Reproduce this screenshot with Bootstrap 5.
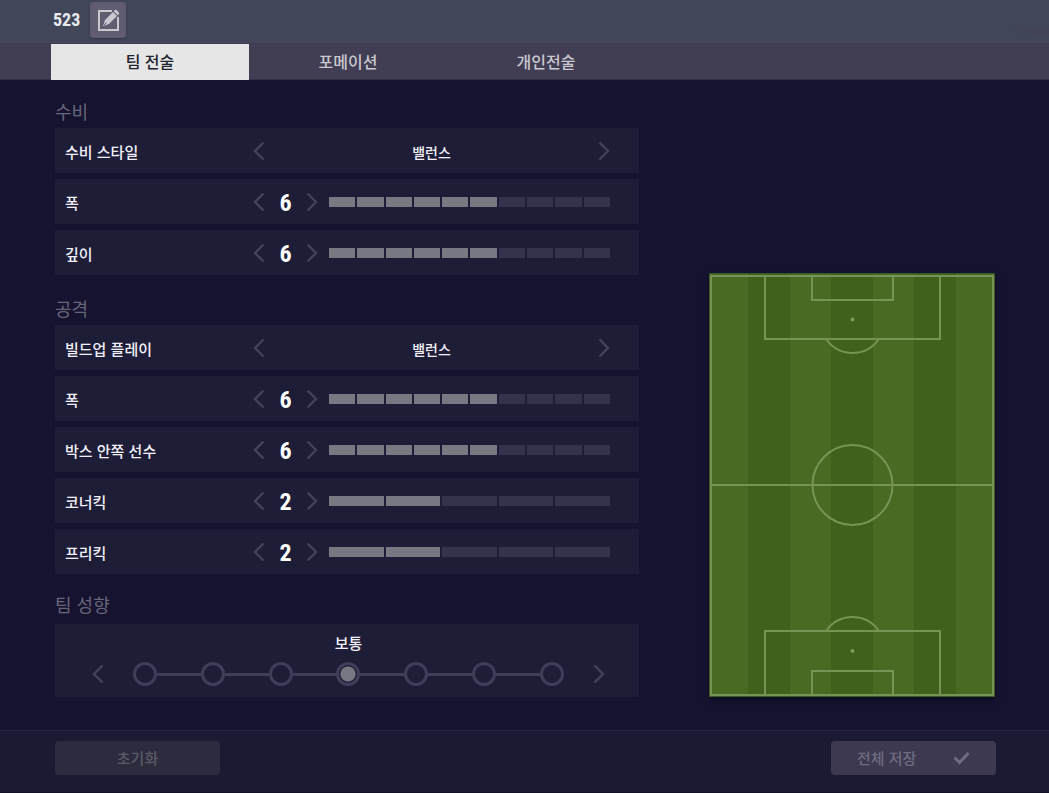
<!DOCTYPE html>
<html lang="ko">
<head>
<meta charset="utf-8">
<meta name="viewport" content="width=device-width, initial-scale=1">
<title>팀 전술</title>
<link href="https://cdn.jsdelivr.net/npm/bootstrap@5.3.0/dist/css/bootstrap.min.css" rel="stylesheet">
<style>
  :root { --line: #403d59; --page: #151330; --panel: #1e1d38; }
  body { background: var(--page); color: #f1f0f8; font: 500 15px/24px "Noto Sans CJK KR", sans-serif; }
  .num { font-family: "Roboto Condensed", "Open Sans Condensed", Roboto, sans-serif; font-weight: 700; }
  .top-bar { height: 43px; padding: 0 0 3px 53px;
    background: radial-gradient(ellipse 50px 5px at 100% 31px, #454054, transparent) , #414759; }
  .top-bar h1 { width: 29px; font-size: 18px; line-height: 24px; color: #e9ebf2; }
  .btn-edit { width: 36px; height: 36px; border-radius: 4px; background: #615d70; box-shadow: 0 1px 2px #2f3342; }
  .tab-bar { height: 37px; padding: 1px 0 0 51px; background: #413d53; border-bottom: 1px solid #35314a; }
  .tab-bar .nav-link { width: 198px; height: 36px; padding: 0; border-radius: 0; font-size: 16px; line-height: 35px; color: #c9c8d0; text-align: center; }
  .tab-bar .nav-link.active { background: #e6e6e6; color: #23222f; }
  .board { display: grid; grid-template-columns: 584fr 286fr; gap: 70px; padding: 19px 54px 33px 55px; align-items: end; }
  .board h2 { margin: 0 0 5px; font-size: 18px; line-height: 24px; font-weight: 400; color: #676579; }
  .rows { display: grid; gap: 6px; margin-bottom: 21px; }
  .rows-last { margin-bottom: 18px; }
  .tactic, .trend { background: var(--panel); }
  .tactic { height: 45px; padding: 0 29px 0 10px; }
  .tactic-name { width: 188px; padding-top: 3px; }
  .tactic output { padding-top: 2px; font-size: 14px; }
  .tactic output.num { width: 41px; font-size: 24px; color: #fff; }
  .step { width: 12px; height: 24px; padding: 0; border: 0; border-radius: 0; display: flex; align-items: center; color: #44425b; flex: none; }
  .step svg, .btn-edit svg, .check { display: block; fill: none; stroke: currentColor; }
  .track { display: flex; gap: 2px; margin-left: 11px; }
  .track i { flex: 1; height: 10px; background: #34324d; }
  .track i.on { background: #777982; }
  .trend { height: 73px; padding: 7px 34px 0 37px; margin-top: 8px; }
  .trend-steps { margin-top: 7px; }
  .dots { margin: 0 29px; }
  .dots input { appearance: none; width: 24px; height: 24px; margin: 0; border: 3px solid var(--line); border-radius: 50%; flex: none; }
  .dots input:checked { background: radial-gradient(circle, #777982 7px, transparent 8px); }
  .dots span { flex: 1; height: 3px; background: var(--line); }
  .field { display: block; width: 100%; height: auto; filter: drop-shadow(0 4px 3px #0d0c22); }
  .bottom-bar { height: 63px; padding: 10px 53px 0 55px; background: #1b1a34; border-top: 1px solid #28263f; border-bottom: 1px solid #121027; }
  .bottom-bar .btn { width: 165px; height: 34px; border: 0; border-radius: 4px; font-size: 15px; font-weight: 500; line-height: 24px; opacity: 1; }
  .btn-reset, .btn-reset:disabled { background: #2c2c3e; color: #5a5a68; padding: 5px; }
  .btn-save, .btn-save:disabled { background: #3d3951; color: #6f6c80; padding: 5px 26px; }
</style>
</head>
<body class="d-flex flex-column min-vh-100">
<header>
  <div class="top-bar d-flex align-items-center">
    <h1 class="num mb-0">523</h1>
    <button type="button" class="btn btn-edit border-0 p-0 ms-2 d-flex align-items-center justify-content-center" aria-label="이름 수정">
      <svg width="24" height="24" viewBox="0 0 24 24" style="color:#c9c8ce"><path d="M16 3H3v19h19V9" stroke-width="2"/><path d="M7 18l2-6 8-8 4 4-8 8zM17.700 3.200l1.200-1.200q.8-.6 1.600 0l2.400 2.400q.6.800 0 1.600l-1.200 1.200z" fill="currentColor" stroke="none"/><path d="M8 17l2.500-2.500" stroke="#615d70"/></svg>
    </button>
  </div>
  <nav class="tab-bar nav" aria-label="전술 메뉴">
    <a class="nav-link active" aria-current="page" href="#team">팀 전술</a>
    <a class="nav-link" href="#formation">포메이션</a>
    <a class="nav-link" href="#personal">개인전술</a>
  </nav>
</header>

<main class="board flex-grow-1" id="team">
  <div>
    <section>
      <h2>수비</h2>
      <div class="rows" id="defence"></div>
    </section>
    <section>
      <h2>공격</h2>
      <div class="rows rows-last" id="attack"></div>
    </section>
    <section>
      <h2>팀 성향</h2>
      <div class="trend">
        <div class="text-center">보통</div>
        <div class="trend-steps d-flex align-items-center" id="trend"></div>
      </div>
    </section>
  </div>
  <svg class="field" viewBox="0 0 286 424" role="img" aria-label="경기장">
    <rect width="286" height="424" fill="#496a22"/>
    <path d="M39 0h42v424H39zM122 0h42v424h-42zM205 0h42v424h-42z" fill="#40611b"/>
    <rect x=".5" y=".5" width="285" height="423" fill="none" stroke="#3c5a25"/>
    <g fill="none" stroke="#789455" stroke-width="2">
      <rect x="2" y="3" width="282" height="419"/>
      <path d="M3 212h280M56 3v63h175V3M103 3v24h81V3M56 422v-64h175v64M103 422v-24h81v24M117 66q10 14 26.500 14T170 66M117 358q10-14 26.500-14T170 358"/>
      <circle cx="143.500" cy="212" r="40"/>
    </g>
    <circle cx="143.500" cy="46.500" r="2" fill="#7c9a59"/><circle cx="143.500" cy="378" r="2" fill="#7c9a59"/>
  </svg>
</main>

<footer class="bottom-bar d-flex justify-content-between align-items-start">
  <button type="button" class="btn btn-reset" disabled>초기화</button>
  <button type="button" class="btn btn-save d-flex justify-content-between align-items-center" disabled>전체 저장
    <svg class="check" width="17" height="14" viewBox="0 0 17 14" stroke-width="3"><path d="M1.500 6.500l5 5L15.500 2"/></svg>
  </button>
</footer>

<script>
  const step = (dir, name) => `<button type="button" class="btn step" aria-label="${name} ${dir < 0 ? '이전' : '다음'}"><svg width="12" height="20" viewBox="0 0 12 20" stroke-width="2.400"><path d="${dir < 0 ? 'M10.500 1.500L2 10l8.500 8.500' : 'M1.500 1.500L10 10l-8.500 8.500'}"/></svg></button>`;
  const choice = (name, value) => `<div class="tactic d-flex align-items-center"><div class="tactic-name">${name}</div>${step(-1, name)}<output class="flex-grow-1 text-center">${value}</output>${step(1, name)}</div>`;
  const level = (name, value, max) => `<div class="tactic d-flex align-items-center"><div class="tactic-name">${name}</div>${step(-1, name)}<output class="num text-center">${value}</output>${step(1, name)}<div class="track flex-grow-1">${Array.from({length: max}, (_, i) => `<i${i < value ? ' class="on"' : ''}></i>`).join('')}</div></div>`;

  document.getElementById('defence').innerHTML = choice('수비 스타일', '밸런스') + level('폭', 6, 10) + level('깊이', 6, 10);
  document.getElementById('attack').innerHTML = choice('빌드업 플레이', '밸런스') + level('폭', 6, 10) + level('박스 안쪽 선수', 6, 10) + level('코너킥', 2, 5) + level('프리킥', 2, 5);
  document.getElementById('trend').innerHTML = step(-1, '팀 성향') + '<div class="dots d-flex align-items-center flex-grow-1">' +
    Array.from({length: 7}, (_, i) => `<input type="radio" name="trend" aria-label="팀 성향 ${i + 1}"${i === 3 ? ' checked' : ''}>`).join('<span></span>') + '</div>' + step(1, '팀 성향');
</script>
<script src="https://cdn.jsdelivr.net/npm/bootstrap@5.3.0/dist/js/bootstrap.bundle.min.js"></script>
</body>
</html>
